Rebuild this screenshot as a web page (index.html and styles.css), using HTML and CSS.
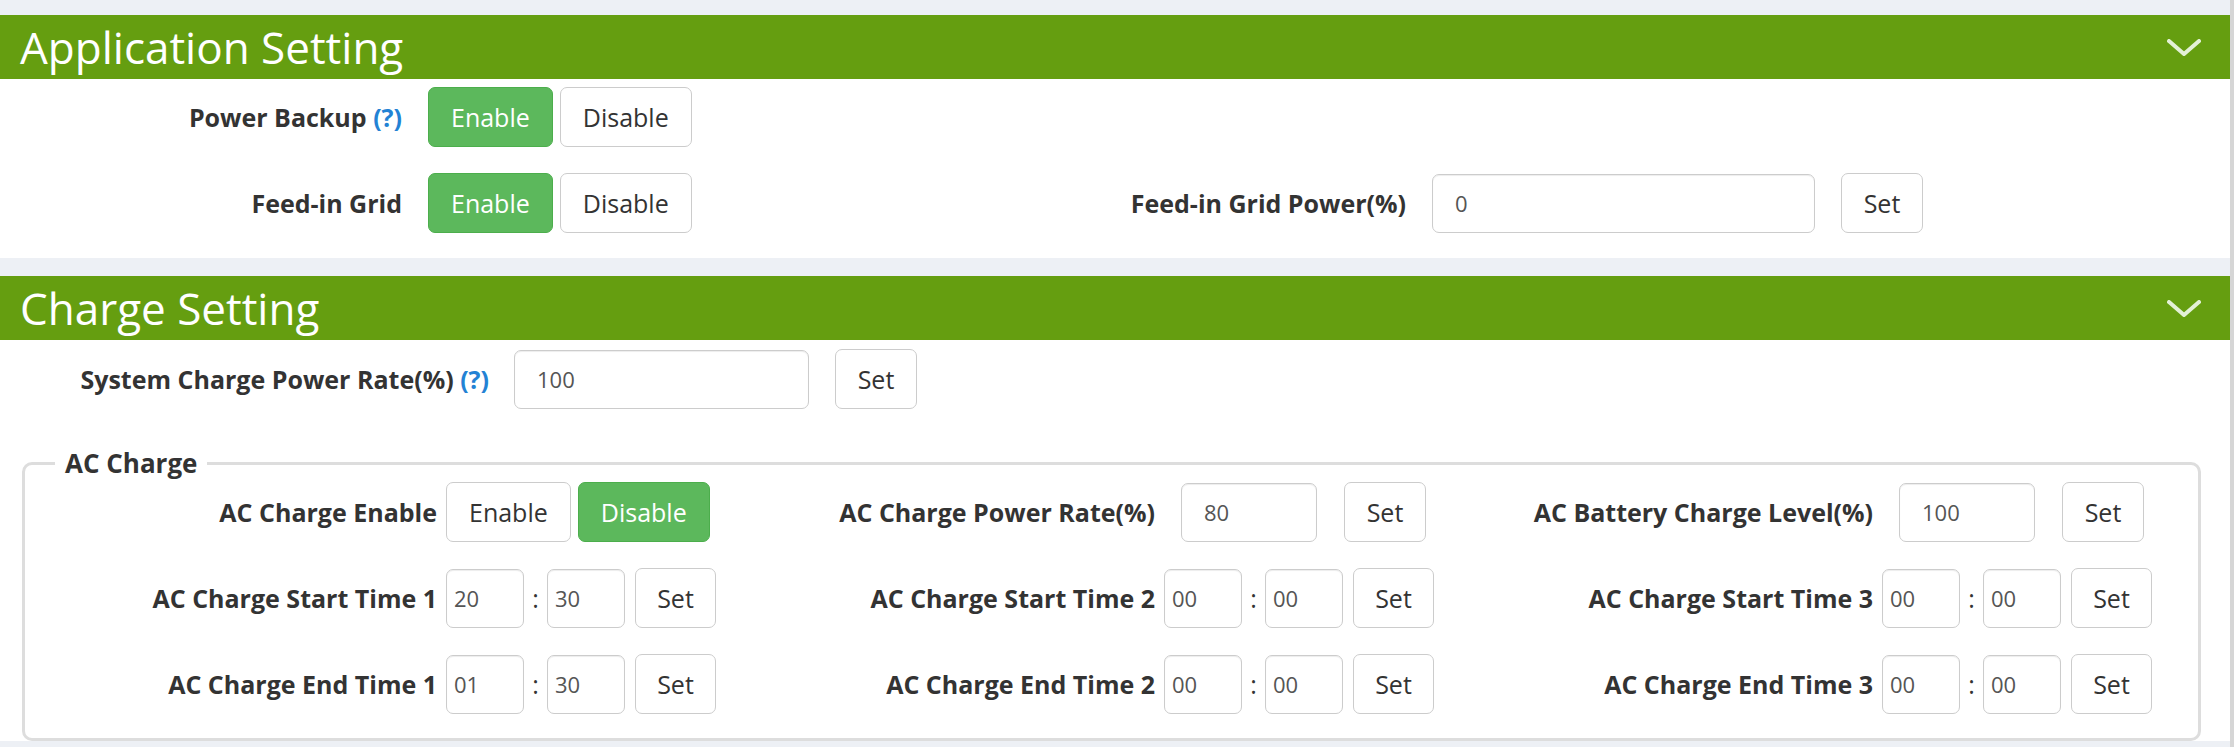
FILE: index.html
```html
<!DOCTYPE html>
<html lang="en">
<head>
<meta charset="utf-8">
<title>Settings</title>
<link rel="stylesheet" href="styles.css">
</head>
<body>
<div class="page">
  <section class="panel">
    <div class="panel-head">
      <h2 class="panel-title">Application Setting</h2>
      <svg class="chevron" viewBox="0 0 34 18"><polyline points="2,2 17,15 32,2" fill="none" stroke="#e3f0d6" stroke-width="4" stroke-linecap="round" stroke-linejoin="round"/></svg>
    </div>
    <div class="panel-body app-body">
      <div class="label">Power Backup <span class="help">(?)</span></div>
      <div class="btn-group">
        <button class="btn btn-on">Enable</button>
        <button class="btn">Disable</button>
      </div>
      <div></div>
      <div></div>

      <div class="label">Feed-in Grid</div>
      <div class="btn-group">
        <button class="btn btn-on">Enable</button>
        <button class="btn">Disable</button>
      </div>
      <div class="label">Feed-in Grid Power(%)</div>
      <div class="pair">
        <input class="input input-wide" type="text" value="0">
        <button class="btn btn-set">Set</button>
      </div>
    </div>
  </section>

  <section class="panel">
    <div class="panel-head">
      <h2 class="panel-title">Charge Setting</h2>
      <svg class="chevron" viewBox="0 0 34 18"><polyline points="2,2 17,15 32,2" fill="none" stroke="#e3f0d6" stroke-width="4" stroke-linecap="round" stroke-linejoin="round"/></svg>
    </div>
    <div class="panel-body charge-body">
      <div class="sys-row">
        <div class="label sys-label">System Charge Power Rate(%) <span class="help">(?)</span></div>
        <div class="pair">
          <input class="input input-sys" type="text" value="100">
          <button class="btn btn-set">Set</button>
        </div>
      </div>

      <fieldset class="ac">
        <legend>AC Charge</legend>
        <div class="ac-grid">
          <div class="cell">
            <div class="label cell-label">AC Charge Enable</div>
            <div class="btn-group ctl-tight">
              <button class="btn">Enable</button>
              <button class="btn btn-on">Disable</button>
            </div>
          </div>
          <div class="cell">
            <div class="label cell-label">AC Charge Power Rate(%)</div>
            <div class="pair ctl-loose">
              <input class="input input-mid" type="text" value="80">
              <button class="btn btn-set">Set</button>
            </div>
          </div>
          <div class="cell">
            <div class="label cell-label">AC Battery Charge Level(%)</div>
            <div class="pair ctl-loose">
              <input class="input input-mid" type="text" value="100">
              <button class="btn btn-set">Set</button>
            </div>
          </div>

          <div class="cell">
            <div class="label cell-label">AC Charge Start Time 1</div>
            <div class="time ctl-tight">
              <input class="input input-time" type="text" value="20">
              <span class="colon">:</span>
              <input class="input input-time" type="text" value="30">
              <button class="btn btn-set btn-time">Set</button>
            </div>
          </div>
          <div class="cell">
            <div class="label cell-label">AC Charge Start Time 2</div>
            <div class="time ctl-tight">
              <input class="input input-time" type="text" value="00">
              <span class="colon">:</span>
              <input class="input input-time" type="text" value="00">
              <button class="btn btn-set btn-time">Set</button>
            </div>
          </div>
          <div class="cell">
            <div class="label cell-label">AC Charge Start Time 3</div>
            <div class="time ctl-tight">
              <input class="input input-time" type="text" value="00">
              <span class="colon">:</span>
              <input class="input input-time" type="text" value="00">
              <button class="btn btn-set btn-time">Set</button>
            </div>
          </div>

          <div class="cell">
            <div class="label cell-label">AC Charge End Time 1</div>
            <div class="time ctl-tight">
              <input class="input input-time" type="text" value="01">
              <span class="colon">:</span>
              <input class="input input-time" type="text" value="30">
              <button class="btn btn-set btn-time">Set</button>
            </div>
          </div>
          <div class="cell">
            <div class="label cell-label">AC Charge End Time 2</div>
            <div class="time ctl-tight">
              <input class="input input-time" type="text" value="00">
              <span class="colon">:</span>
              <input class="input input-time" type="text" value="00">
              <button class="btn btn-set btn-time">Set</button>
            </div>
          </div>
          <div class="cell">
            <div class="label cell-label">AC Charge End Time 3</div>
            <div class="time ctl-tight">
              <input class="input input-time" type="text" value="00">
              <span class="colon">:</span>
              <input class="input input-time" type="text" value="00">
              <button class="btn btn-set btn-time">Set</button>
            </div>
          </div>
        </div>
      </fieldset>
    </div>
  </section>
</div>
<div class="scrollbar"></div>
</body>
</html>
```

FILE: styles.css
```css
* { box-sizing: border-box; }

html, body { height: 100%; }

body {
  margin: 0;
  display: flex;
  background: #edf0f5;
  font-family: "Open Sans", "Noto Sans", sans-serif;
  font-size: 25px;
  color: #333;
}

.page {
  flex: 1;
  padding-top: 15px;
  min-width: 0;
}

.scrollbar {
  width: 4px;
  flex: none;
  background: #d6d6d6;
}

.panel + .panel { margin-top: 18px; }

.panel-head {
  height: 64px;
  background: #659e10;
  display: flex;
  align-items: center;
  justify-content: space-between;
  padding: 0 29px 0 20px;
}

.panel-title {
  margin: 0;
  font-size: 44px;
  font-weight: 400;
  line-height: 64px;
  color: #fff;
}

.chevron { width: 34px; height: 18px; margin-top: 2px; }

.panel-body { background: #fff; }

.label {
  font-weight: 700;
  font-size: 25px;
  text-align: right;
  white-space: nowrap;
}

.help { color: #2382d4; }

.app-body {
  display: grid;
  grid-template-columns: 402px 500px 452px 1fr;
  grid-auto-rows: 60px;
  column-gap: 26px;
  row-gap: 26px;
  align-items: center;
  padding: 8px 0 25px;
}

.btn-group { display: flex; gap: 7px; }

.btn {
  height: 60px;
  padding: 0 22px;
  border: 1px solid #ccc;
  border-radius: 7px;
  background: #fff;
  color: #333;
  font-family: inherit;
  font-size: 25px;
  line-height: 58px;
}

.btn-on {
  background: #5cb85c;
  border-color: #4cae4c;
  color: #fff;
}

.btn-set { width: 82px; padding: 0; }

.pair { display: flex; align-items: center; gap: 26px; }

.input {
  height: 59px;
  border: 1px solid #ccc;
  border-radius: 7px;
  box-shadow: inset 0 1px 1px rgba(0, 0, 0, .075);
  padding: 0 0 0 22px;
  font-family: inherit;
  font-size: 22px;
  color: #555;
  background: #fff;
}

.input-wide { width: 383px; }

.charge-body { padding-top: 9px; }

.sys-row { display: flex; align-items: center; height: 60px; }
.sys-label { width: 489px; margin-right: 25px; }
.input-sys { width: 295px; }

.ac {
  margin: 37px 29px 0 22px;
  border: 3px solid #ddd;
  border-radius: 10px;
  padding: 2px 0 24px 1px;
  min-width: 0;
}

.ac legend {
  margin-left: 29px;
  padding: 0 10px;
  font-weight: 700;
  font-size: 26px;
  line-height: 34px;
}

.ac-grid {
  display: grid;
  grid-template-columns: repeat(3, 718px);
  grid-auto-rows: 60px;
  row-gap: 26px;
}

.cell { display: flex; align-items: center; }
.cell-label { width: 411px; flex: none; }

.ctl-tight { margin-left: 9px; }
.ctl-loose { margin-left: 26px; gap: 27px; }

.input-mid { width: 136px; }

.time { display: flex; align-items: center; }
.input-time { width: 78px; padding-left: 7px; }
.colon { width: 23px; text-align: center; }
.btn-time { margin-left: 10px; width: 81px; }
```
